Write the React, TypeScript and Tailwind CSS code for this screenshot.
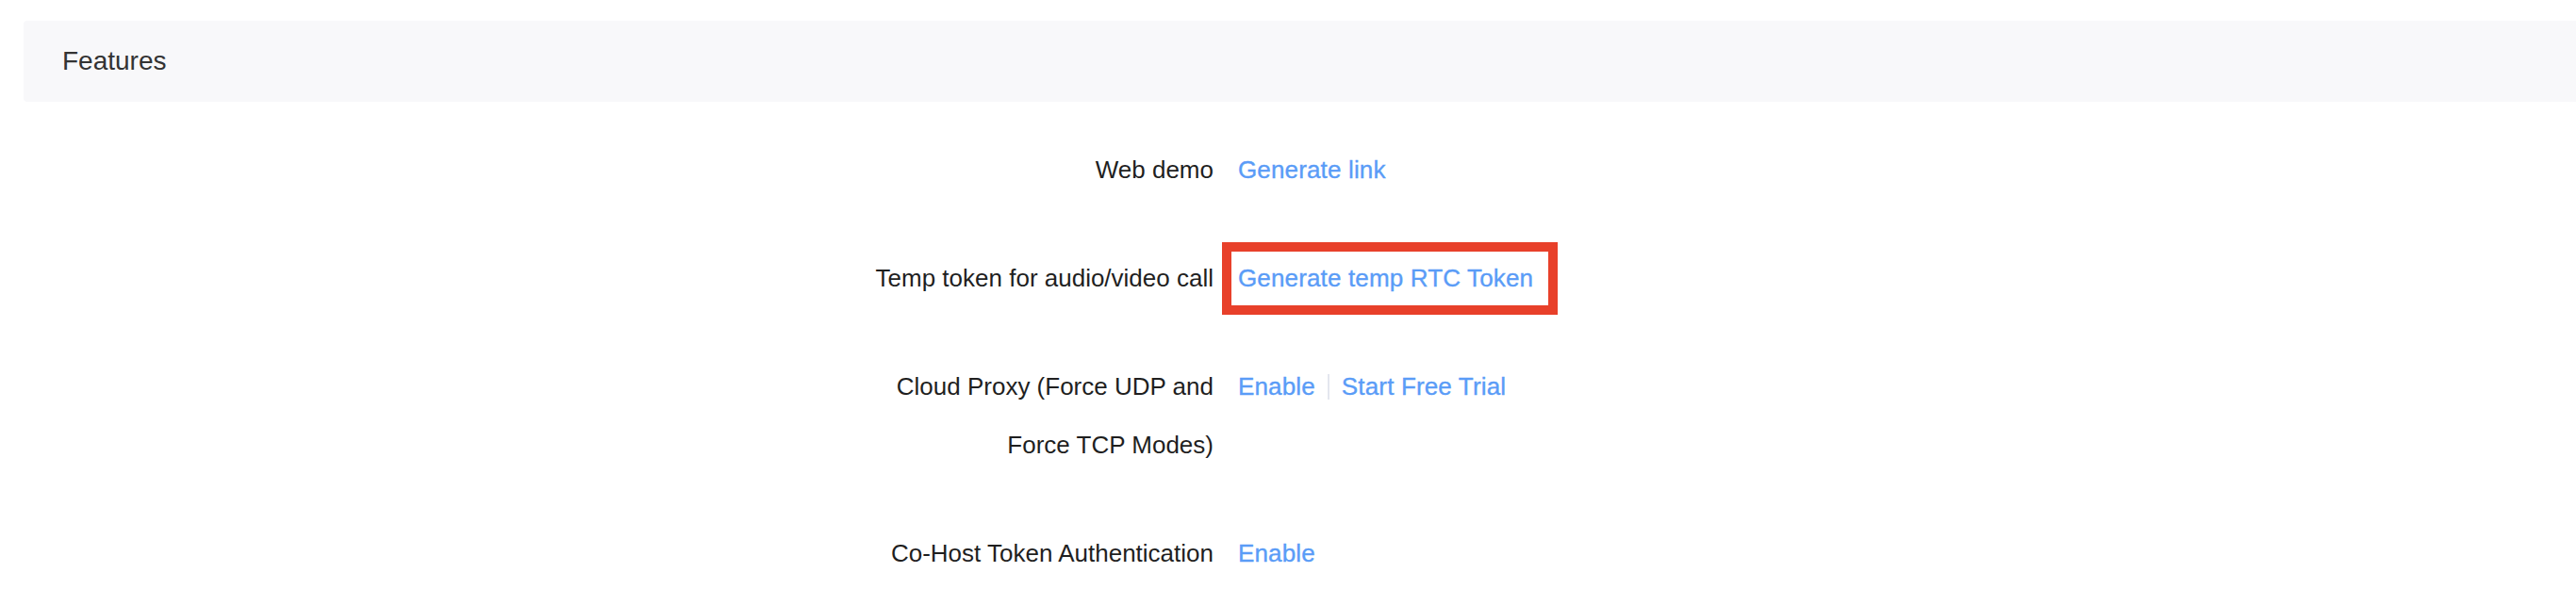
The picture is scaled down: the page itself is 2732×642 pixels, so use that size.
import React from 'react';

interface FeatureRowProps {
  label: string;
  children: React.ReactNode;
}

const FeatureRow: React.FC<FeatureRowProps> = ({ label, children }) => (
  <div className="flex items-start mb-[53px]">
    <div className="ml-[900px] w-[387px] shrink-0 text-right text-[#1f1f1f]">{label}</div>
    <div className="ml-[26px] flex items-center h-[62px]">{children}</div>
  </div>
);

const LinkText: React.FC<{ children: React.ReactNode }> = ({ children }) => (
  <a className="text-[#5a9cf7] cursor-pointer whitespace-nowrap tracking-[0.15px] [-webkit-text-stroke:0.35px_#5a9cf7]">
    {children}
  </a>
);

export default function App() {
  return (
    <div
      className="min-h-[642px] bg-white pt-[22px] overflow-hidden"
      style={{ fontFamily: '"Liberation Sans", Arial, sans-serif' }}
    >
      {/* section header */}
      <div className="ml-[25px] h-[86px] rounded-l-[4px] bg-[#f8f8fa] flex items-center pl-[41px]">
        <span className="text-[28px] text-[#333333]">Features</span>
      </div>

      <div className="mt-[41px] text-[26px] leading-[62px]">
        <FeatureRow label="Web demo">
          <LinkText>Generate link</LinkText>
        </FeatureRow>

        <FeatureRow label="Temp token for audio/video call">
          <span className="relative inline-block">
            <LinkText>Generate temp RTC Token</LinkText>
            {/* highlight box */}
            <span className="absolute -top-[7px] -bottom-[8px] -left-[17px] -right-[26px] border-[10px] border-[#e8402a] pointer-events-none" />
          </span>
        </FeatureRow>

        <FeatureRow label="Cloud Proxy (Force UDP and Force TCP Modes)">
          <LinkText>Enable</LinkText>
          <span className="mx-[13px] w-[2px] h-[27px] bg-[#e4e6ee]" />
          <LinkText>Start Free Trial</LinkText>
        </FeatureRow>

        <FeatureRow label="Co-Host Token Authentication">
          <LinkText>Enable</LinkText>
        </FeatureRow>
      </div>
    </div>
  );
}
